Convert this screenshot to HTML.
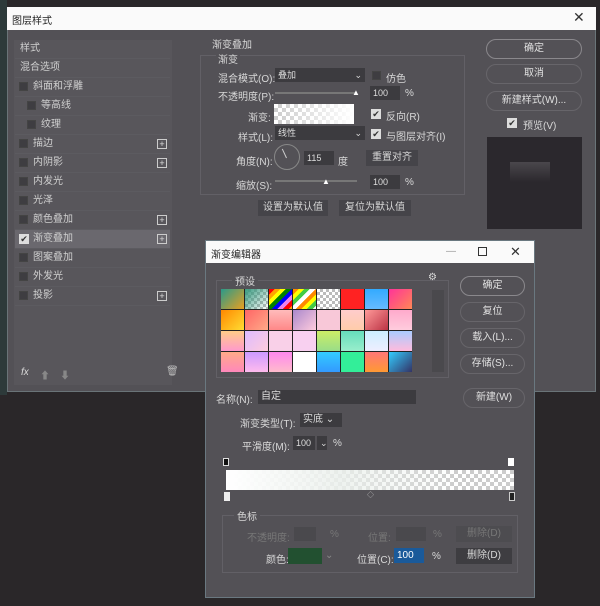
<!DOCTYPE html><html><head><meta charset="utf-8"><style>
*{margin:0;padding:0;box-sizing:border-box}
body{width:600px;height:606px;background:#2a2729;position:relative;overflow:hidden;font-family:"Liberation Sans","Noto Sans CJK SC",sans-serif;font-size:10px;color:#d8d8d8}
.a{position:absolute}
.t{position:absolute;white-space:nowrap}
.btn{position:absolute;border:1px solid #8a888c;border-radius:10px;text-align:center;color:#e0e0e0;font-size:10px;line-height:18px;height:20px}
.inp{position:absolute;background:#3c3b3f;height:14px;color:#ddd;font-size:9px;line-height:14px;padding-left:3px}
.cb{position:absolute;width:9px;height:9px;border:1px solid #444;background:#3e3d41}
.ck{position:absolute;width:10px;height:10px;background:#ddd;color:#333;font-size:9px;line-height:10px;text-align:center}
.row{position:absolute;left:15px;width:155px;height:19px;border-bottom:1px solid #5c5b60;font-size:10px;line-height:18px;color:#d0d0d0}
.plus{position:absolute;right:3px;top:4px;width:10px;height:10px;border:1px solid #ccc;font-size:9px;line-height:8px;text-align:center;color:#ddd}
.chk{background:repeating-conic-gradient(#ccc 0 25%,#fff 0 50%) 0 0/8px 8px}
</style></head><body>
<div class="a" style="left:0;top:0;width:7px;height:395px;background:#2d3a3a"></div>
<div class="a" style="left:7px;top:7px;width:589px;height:385px;background:#535156;border:1px solid #6a7478"></div>
<div class="a" style="left:7px;top:7px;width:589px;height:23px;background:#fafafa"></div>
<div class="t" style="left:12px;top:12px;color:#222;font-size:10px">图层样式</div>
<div class="t" style="left:573px;top:9px;color:#333;font-size:14px">✕</div>
<!-- left list -->
<div class="a" style="left:14px;top:40px;width:158px;height:345px;background:#58565b"></div>
<div class="row" style="top:40px;padding-left:5px">样式</div>
<div class="row" style="top:59px;padding-left:5px">混合选项</div>
<div class="row" style="top:78px;padding-left:18px"><span class="cb" style="left:4px;top:4px"></span>斜面和浮雕</div>
<div class="row" style="top:97px;padding-left:26px"><span class="cb" style="left:12px;top:4px"></span>等高线</div>
<div class="row" style="top:116px;padding-left:26px"><span class="cb" style="left:12px;top:4px"></span>纹理</div>
<div class="row" style="top:135px;padding-left:18px"><span class="cb" style="left:4px;top:4px"></span>描边<span class="plus">+</span></div>
<div class="row" style="top:154px;padding-left:18px"><span class="cb" style="left:4px;top:4px"></span>内阴影<span class="plus">+</span></div>
<div class="row" style="top:173px;padding-left:18px"><span class="cb" style="left:4px;top:4px"></span>内发光</div>
<div class="row" style="top:192px;padding-left:18px"><span class="cb" style="left:4px;top:4px"></span>光泽</div>
<div class="row" style="top:211px;padding-left:18px"><span class="cb" style="left:4px;top:4px"></span>颜色叠加<span class="plus">+</span></div>
<div class="row" style="top:230px;padding-left:18px;background:#6a686e"><span class="ck" style="left:4px;top:4px">✔</span>渐变叠加<span class="plus">+</span></div>
<div class="row" style="top:249px;padding-left:18px"><span class="cb" style="left:4px;top:4px"></span>图案叠加</div>
<div class="row" style="top:268px;padding-left:18px"><span class="cb" style="left:4px;top:4px"></span>外发光</div>
<div class="row" style="top:287px;padding-left:18px"><span class="cb" style="left:4px;top:4px"></span>投影<span class="plus">+</span></div>
<div class="t" style="left:21px;top:367px;font-size:10px;font-style:italic">fx</div>
<div class="t" style="left:40px;top:367px;color:#888">⬆</div><div class="t" style="left:60px;top:367px;color:#888">⬇</div>
<div class="t" style="left:166px;top:366px;color:#bbb">🗑</div>
<!-- middle -->
<div class="t" style="left:212px;top:36px">渐变叠加</div>
<div class="a" style="left:200px;top:55px;width:265px;height:140px;border:1px solid #626066"></div>
<div class="t" style="left:216px;top:51px;background:#535156;padding:0 2px">渐变</div>
<div class="t" style="left:218px;top:70px">混合模式(O):</div>
<div class="inp" style="left:275px;top:68px;width:90px">叠加<span style="float:right;padding-right:3px">⌄</span></div>
<div class="cb" style="left:372px;top:71px"></div><div class="t" style="left:386px;top:70px">仿色</div>
<div class="t" style="left:218px;top:88px">不透明度(P):</div>
<div class="a" style="left:275px;top:92px;width:82px;height:2px;background:#777"></div>
<div class="t" style="left:352px;top:88px;color:#fff;font-size:8px">▲</div>
<div class="inp" style="left:370px;top:86px;width:30px">100</div><div class="t" style="left:405px;top:88px">%</div>
<div class="t" style="left:248px;top:109px">渐变:</div>
<div class="a" style="left:274px;top:104px;width:80px;height:20px;background:linear-gradient(90deg,rgba(255,255,255,0),#fff),repeating-conic-gradient(#ccc 0 25%,#fff 0 50%) 0 0/8px 8px"></div>
<div class="ck" style="left:371px;top:109px">✔</div><div class="t" style="left:386px;top:108px">反向(R)</div>
<div class="t" style="left:238px;top:129px">样式(L):</div>
<div class="inp" style="left:275px;top:126px;width:90px">线性<span style="float:right;padding-right:3px">⌄</span></div>
<div class="ck" style="left:371px;top:129px">✔</div><div class="t" style="left:386px;top:128px">与图层对齐(I)</div>
<div class="t" style="left:236px;top:153px">角度(N):</div>
<div class="a" style="left:274px;top:144px;width:26px;height:26px;border:1px solid #888;border-radius:50%"></div>
<div class="a" style="left:286px;top:148px;width:1px;height:10px;background:#ccc;transform:rotate(-25deg);transform-origin:bottom"></div>
<div class="inp" style="left:304px;top:151px;width:30px">115</div><div class="t" style="left:338px;top:153px">度</div>
<div class="a" style="left:366px;top:150px;width:52px;height:16px;background:#454449;text-align:center;line-height:16px">重置对齐</div>
<div class="t" style="left:236px;top:177px">缩放(S):</div>
<div class="a" style="left:275px;top:180px;width:82px;height:2px;background:#777"></div>
<div class="t" style="left:322px;top:177px;color:#fff;font-size:8px">▲</div>
<div class="inp" style="left:370px;top:175px;width:30px">100</div><div class="t" style="left:405px;top:177px">%</div>
<div class="a" style="left:258px;top:200px;width:70px;height:16px;background:#454449;text-align:center;line-height:16px">设置为默认值</div>
<div class="a" style="left:339px;top:200px;width:72px;height:16px;background:#454449;text-align:center;line-height:16px">复位为默认值</div>
<!-- right -->
<div class="btn" style="left:486px;top:39px;width:96px">确定</div>
<div class="btn" style="left:486px;top:64px;width:96px;border-color:#67656a">取消</div>
<div class="btn" style="left:486px;top:91px;width:96px;border-color:#67656a">新建样式(W)...</div>
<div class="ck" style="left:507px;top:118px">✔</div><div class="t" style="left:523px;top:117px">预览(V)</div>
<div class="a" style="left:487px;top:137px;width:95px;height:92px;background:#2b282d"></div>
<div class="a" style="left:510px;top:162px;width:40px;height:20px;background:linear-gradient(180deg,#4a474c,#2b282d)"></div>
<!-- gradient editor -->
<div class="a" style="left:205px;top:240px;width:330px;height:358px;background:#535156;border:1px solid #6a7880"></div>
<div class="a" style="left:206px;top:241px;width:328px;height:22px;background:#fafafa"></div>
<div class="t" style="left:211px;top:246px;color:#222">渐变编辑器</div>
<div class="t" style="left:446px;top:246px;color:#999">—</div>
<div class="a" style="left:478px;top:247px;width:9px;height:9px;border:1px solid #333"></div>
<div class="t" style="left:510px;top:244px;color:#333;font-size:13px">✕</div>
<div class="a" style="left:216px;top:280px;width:233px;height:98px;border:1px solid #626066"></div>
<div class="t" style="left:232px;top:273px;background:#535156;padding:0 3px">预设</div>
<div class="t" style="left:428px;top:272px">⚙</div>
<div class="a" style="left:221px;top:289px;width:191px;height:83px;display:grid;grid-template-columns:repeat(8,1fr);grid-template-rows:repeat(4,1fr);gap:1px;background:#222">
<div style="background:linear-gradient(135deg,#2a9a8a,#e8a020)"></div><div class="chk" style="background:linear-gradient(135deg,#3a9a80,transparent),repeating-conic-gradient(#bbb 0 25%,#fff 0 50%) 0 0/6px 6px"></div><div style="background:repeating-linear-gradient(135deg,red 0 4px,orange 4px 8px,yellow 8px 12px,green 12px 16px,blue 16px 20px,violet 20px 24px)"></div><div style="background:repeating-linear-gradient(135deg,#f80 0 4px,#ff0 4px 8px,#4c4 8px 12px,#fff 12px 16px)"></div><div style="background:repeating-conic-gradient(#bbb 0 25%,#fff 0 50%) 0 0/6px 6px"></div><div style="background:#f22"></div><div style="background:linear-gradient(#3af,#6bf)"></div><div style="background:linear-gradient(135deg,#f39,#f85)"></div>
<div style="background:linear-gradient(135deg,#f80,#fd3)"></div><div style="background:linear-gradient(135deg,#f66,#fa8)"></div><div style="background:linear-gradient(#fbb,#f88)"></div><div style="background:linear-gradient(135deg,#a8c,#fcd)"></div><div style="background:#f8c8d8"></div><div style="background:linear-gradient(#fcc,#fca)"></div><div style="background:linear-gradient(135deg,#f99,#b34)"></div><div style="background:linear-gradient(#fac,#fcd)"></div>
<div style="background:linear-gradient(#fc8,#f9c)"></div><div style="background:linear-gradient(135deg,#dbf,#fcd)"></div><div style="background:#f9d0e8"></div><div style="background:#f8d0f0"></div><div style="background:linear-gradient(#ce6,#9d8)"></div><div style="background:linear-gradient(#6db,#9ec)"></div><div style="background:linear-gradient(#cef,#eef)"></div><div style="background:linear-gradient(#acf,#fbd)"></div>
<div style="background:linear-gradient(#fa8,#f8b)"></div><div style="background:linear-gradient(#c9f,#fbe)"></div><div style="background:linear-gradient(#f8e,#fbc)"></div><div style="background:#fff"></div><div style="background:linear-gradient(#3cf,#39f)"></div><div style="background:#3e9"></div><div style="background:linear-gradient(#f77,#f93)"></div><div style="background:linear-gradient(135deg,#3cf,#336)"></div>
</div>
<div class="a" style="left:432px;top:290px;width:12px;height:82px;background:#4a494d"></div>
<div class="btn" style="left:460px;top:276px;width:65px">确定</div>
<div class="btn" style="left:460px;top:302px;width:65px;border-color:#67656a">复位</div>
<div class="btn" style="left:460px;top:328px;width:65px;border-color:#67656a">载入(L)...</div>
<div class="btn" style="left:460px;top:354px;width:65px;border-color:#67656a">存储(S)...</div>
<div class="t" style="left:216px;top:391px">名称(N):</div>
<div class="inp" style="left:258px;top:390px;width:158px;font-size:10px">自定</div>
<div class="btn" style="left:463px;top:388px;width:62px;border-color:#67656a">新建(W)</div>
<div class="t" style="left:240px;top:415px">渐变类型(T):</div>
<div class="inp" style="left:300px;top:413px;width:42px;font-size:10px">实底 ⌄</div>
<div class="t" style="left:242px;top:438px">平滑度(M):</div>
<div class="inp" style="left:293px;top:436px;width:22px">100</div><div class="inp" style="left:317px;top:436px;width:10px">⌄</div><div class="t" style="left:333px;top:438px">%</div>
<div class="a" style="left:223px;top:458px;width:6px;height:8px;background:#111;border:1px solid #ddd"></div>
<div class="a" style="left:508px;top:458px;width:6px;height:8px;background:#fff"></div>
<div class="a" style="left:226px;top:470px;width:288px;height:20px;background:linear-gradient(90deg,#fff,rgba(235,240,236,.85) 40%,rgba(255,255,255,0) 80%),repeating-conic-gradient(#ccc 0 25%,#fff 0 50%) 0 0/8px 8px"></div>
<div class="a" style="left:224px;top:492px;width:6px;height:9px;background:#eee"></div>
<div class="a" style="left:509px;top:492px;width:6px;height:9px;background:#222;border:1px solid #ccc"></div>
<div class="t" style="left:367px;top:490px;font-size:7px;color:#bbb">◇</div>
<div class="a" style="left:222px;top:515px;width:296px;height:58px;border:1px solid #626066"></div>
<div class="t" style="left:234px;top:508px;background:#535156;padding:0 3px">色标</div>
<div class="t" style="left:247px;top:529px;color:#777">不透明度:</div>
<div class="a" style="left:294px;top:527px;width:22px;height:14px;background:#4a494d"></div><div class="t" style="left:330px;top:529px;color:#777">%</div>
<div class="t" style="left:368px;top:529px;color:#777">位置:</div>
<div class="a" style="left:396px;top:527px;width:30px;height:14px;background:#4a494d"></div><div class="t" style="left:433px;top:529px;color:#777">%</div>
<div class="a" style="left:456px;top:526px;width:56px;height:16px;background:#4d4c50;color:#777;text-align:center;line-height:16px">删除(D)</div>
<div class="t" style="left:266px;top:551px">颜色:</div>
<div class="a" style="left:288px;top:548px;width:34px;height:16px;background:#225030"></div><div class="t" style="left:325px;top:550px;color:#888">⌄</div>
<div class="t" style="left:357px;top:551px">位置(C):</div>
<div class="a" style="left:394px;top:548px;width:30px;height:15px;background:#1a5a9a;color:#fff;line-height:15px;padding-left:3px">100</div>
<div class="t" style="left:432px;top:551px">%</div>
<div class="a" style="left:456px;top:548px;width:56px;height:16px;background:#3e3d41;text-align:center;line-height:16px">删除(D)</div>
</body></html>
